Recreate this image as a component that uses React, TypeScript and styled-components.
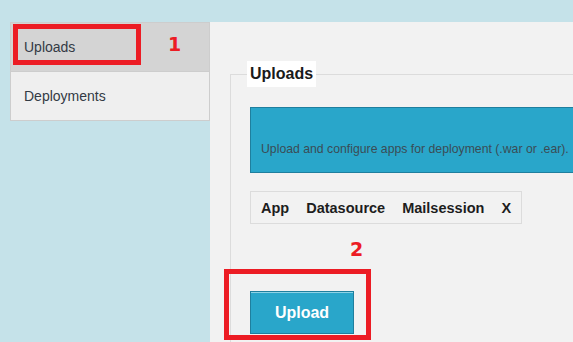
import React from "react";
import styled, { createGlobalStyle } from "styled-components";

const GlobalStyle = createGlobalStyle`
  html, body {
    margin: 0;
    padding: 0;
    background: #c5e2e9;
    font-family: "Liberation Sans", Arial, sans-serif;
    overflow: hidden;
  }
`;

const Page = styled.div`
  position: relative;
  display: flex;
  align-items: flex-start;
  height: 342px;
  padding-top: 22px;
  box-sizing: border-box;
  overflow: hidden;
`;

const Sidebar = styled.nav`
  margin-left: 10px;
  width: 200px;
  box-sizing: border-box;
  border: 1px solid #cdcdcd;
  display: flex;
  flex-direction: column;
`;

const NavItem = styled.div<{ $active?: boolean }>`
  height: 48px;
  display: flex;
  align-items: center;
  padding-left: 13px;
  font-size: 14px;
  color: #333a44;
  background: ${(p) => (p.$active ? "#d4d4d4" : "#efefef")};
  border-bottom: ${(p) => (p.$active ? "1px solid #cdcdcd" : "none")};
`;

const Main = styled.main`
  flex: 1;
  align-self: stretch;
  background: #f2f2f2;
  padding: 39px 0 0 20px;
  overflow: hidden;
  min-width: 0;
`;

const Fieldset = styled.fieldset`
  margin: 0;
  padding: 0 0 40px 19px;
  border: 1px solid #dcdcdc;
  border-right: none;
  min-width: 0;
  width: 400px;
`;

const Legend = styled.legend`
  margin-left: -3px;
  padding: 0 3px;
  background: #fff;
  font-size: 16px;
  font-weight: bold;
  line-height: 26px;
  color: #1a1a1a;
`;

const InfoBox = styled.div`
  margin-top: 20px;
  width: 380px;
  height: 66px;
  box-sizing: border-box;
  background: #29a6ca;
  border: 1px solid #1f7f9e;
  padding: 33px 0 0 10px;
  font-size: 12.25px;
  line-height: 16px;
  color: #3b4c55;
  white-space: nowrap;
`;

const TabBar = styled.div`
  margin-top: 18px;
  display: inline-flex;
  align-items: center;
  gap: 17px;
  height: 33px;
  box-sizing: border-box;
  padding: 0 10px;
  border: 1px solid #dcdcdc;
`;

const Tab = styled.span`
  font-size: 14.5px;
  font-weight: bold;
  color: #1d1d1d;
`;

const ButtonRow = styled.div`
  margin-top: 67px;
`;

const UploadButton = styled.button`
  width: 104px;
  height: 43px;
  background: #29a6ca;
  border: 1px solid #1f7f9e;
  box-shadow: inset 0 1px 0 #8fd3e6;
  color: #fff;
  font-family: "Liberation Sans", Arial, sans-serif;
  font-size: 16px;
  font-weight: bold;
  padding: 0;
`;

const Highlight = styled.div<{ $x: number; $y: number; $w: number; $h: number }>`
  position: absolute;
  left: ${(p) => p.$x}px;
  top: ${(p) => p.$y}px;
  width: ${(p) => p.$w}px;
  height: ${(p) => p.$h}px;
  box-sizing: border-box;
  border: 5px solid #ec1c24;
  pointer-events: none;
`;

const Marker = styled.span<{ $x: number; $y: number }>`
  position: absolute;
  left: ${(p) => p.$x}px;
  top: ${(p) => p.$y}px;
  font-family: "DejaVu Sans", sans-serif;
  font-weight: bold;
  font-size: 19px;
  line-height: 20px;
  color: #ec1c24;
`;

export default function App() {
  return (
    <>
      <GlobalStyle />
      <Page>
        <Sidebar>
          <NavItem $active>Uploads</NavItem>
          <NavItem>Deployments</NavItem>
        </Sidebar>
        <Main>
          <Fieldset>
            <Legend>Uploads</Legend>
            <InfoBox>Upload and configure apps for deployment (.war or .ear).</InfoBox>
            <TabBar>
              <Tab>App</Tab>
              <Tab>Datasource</Tab>
              <Tab>Mailsession</Tab>
              <Tab>X</Tab>
            </TabBar>
            <ButtonRow>
              <UploadButton>Upload</UploadButton>
            </ButtonRow>
          </Fieldset>
        </Main>
        <Highlight $x={13} $y={24} $w={128} $h={41} />
        <Marker $x={168} $y={34}>1</Marker>
        <Highlight $x={224} $y={269} $w={147} $h={71} />
        <Marker $x={350} $y={239}>2</Marker>
      </Page>
    </>
  );
}
